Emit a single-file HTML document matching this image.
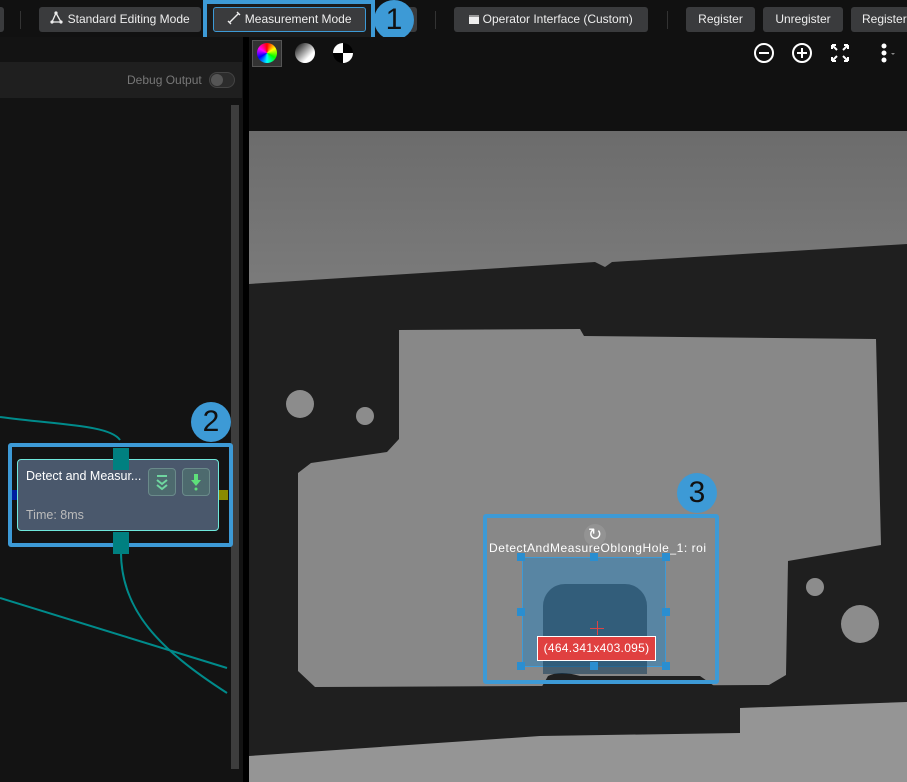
<!DOCTYPE html>
<html><head><style>
*{margin:0;padding:0;box-sizing:border-box}
body{width:907px;height:782px;background:#111;position:relative;overflow:hidden;font-family:"Liberation Sans",Arial,sans-serif;color:#ddd}
.btn{position:absolute;top:7px;height:25px;background:#3a3b3d;border-radius:3px;font-size:12px;color:#eee;line-height:25px;text-align:center}
.abs{position:absolute}
.badge{position:absolute;width:40px;height:40px;border-radius:50%;background:#3d9ad6;color:#111;font-size:30px;text-align:center;line-height:40px}
</style></head><body>
<div class="abs" style="left:0;top:0;width:907px;height:37px;background:#111"></div>
<div class="btn" style="left:-4px;width:8px"></div>
<div class="abs" style="left:20px;top:11px;width:1px;height:18px;background:#333"></div>
<div class="btn" style="left:39px;width:162px">
<svg width="14" height="14" viewBox="0 0 14 14" style="vertical-align:-2px"><circle cx="6" cy="2" r="1.6" fill="#eee"/><circle cx="2" cy="11" r="1.6" fill="#eee"/><circle cx="11" cy="11" r="1.6" fill="#eee"/><path d="M6 2L2 11M6 2L11 11M2 11H11" stroke="#eee" stroke-width="1.3"/></svg> Standard Editing Mode</div>
<div class="abs" style="left:203px;top:0;width:172px;height:41px;border:4px solid #3d9ad6;background:#1b1b1b"></div>
<div class="btn" style="left:213px;width:153px;top:7px;border:1px solid #3d9ad6;line-height:23px;background:#3a3b3d">
<svg width="14" height="14" viewBox="0 0 14 14" style="vertical-align:-2px"><path d="M2 12L12 2M1 10l3 3M10 1l3 3" stroke="#eee" stroke-width="1.4"/></svg> Measurement Mode</div>
<div class="btn" style="left:395px;width:22px"></div>
<div class="badge" style="left:374px;top:0">1</div>
<div class="abs" style="left:435px;top:11px;width:1px;height:18px;background:#333"></div>
<div class="btn" style="left:454px;width:194px"><span style="display:inline-block;width:10px;height:9px;background:#eee;border-top:2px solid #999;vertical-align:-1px"></span> Operator Interface (Custom)</div>
<div class="abs" style="left:667px;top:11px;width:1px;height:18px;background:#333"></div>
<div class="btn" style="left:686px;width:69px">Register</div>
<div class="btn" style="left:763px;width:80px">Unregister</div>
<div class="btn" style="left:851px;width:70px;text-align:left;padding-left:11px">Register</div>

<div class="abs" style="left:0;top:37px;width:243px;height:745px;background:#131313"></div>
<div class="abs" style="left:0;top:62px;width:242px;height:36px;background:#1f1f1f"></div>
<div class="abs" style="left:127px;top:73px;font-size:12px;color:#777">Debug Output</div>
<div class="abs" style="left:209px;top:72px;width:26px;height:16px;border-radius:8px;background:#2c2c2c;border:1px solid #444"></div>
<div class="abs" style="left:211px;top:74px;width:12px;height:12px;border-radius:50%;background:#555"></div>
<div class="abs" style="left:231px;top:105px;width:8px;height:664px;background:#3d3d3d"></div>
<div class="abs" style="left:243px;top:37px;width:6px;height:745px;background:#000"></div>
<svg class="abs" style="left:0;top:0" width="243" height="782">
<path d="M0 417 C60 425 110 425 120 440" stroke="#008b8b" stroke-width="2" fill="none"/>
<path d="M0 598 L227 668" stroke="#008b8b" stroke-width="2" fill="none"/>
<path d="M121 550 C120 610 160 650 227 693" stroke="#008b8b" stroke-width="2" fill="none"/>
</svg>
<div class="abs" style="left:8px;top:443px;width:225px;height:104px;border:4px solid #3d9ad6;border-radius:3px"></div>
<div class="abs" style="left:17px;top:459px;width:202px;height:72px;background:#4a586c;border:1px solid #6fe8dc;border-radius:4px"></div>
<div class="abs" style="left:26px;top:469px;font-size:12.5px;color:#fff">Detect and Measur...</div>
<div class="abs" style="left:26px;top:508px;font-size:12.5px;color:#bbb">Time: 8ms</div>
<div class="abs" style="left:148px;top:468px;width:28px;height:28px;border:1px solid #6a8a8a;border-radius:4px;background:#4d6a6e"><svg width="26" height="26" viewBox="0 0 26 26"><path d="M8 7h10" stroke="#6fd6a0" stroke-width="2"/><path d="M8 11l5 4 5-4M8 16l5 4 5-4" stroke="#6fd6a0" stroke-width="2" fill="none"/></svg></div>
<div class="abs" style="left:182px;top:468px;width:28px;height:28px;border:1px solid #6a8a8a;border-radius:4px;background:#4d6a6e"><svg width="26" height="26" viewBox="0 0 26 26"><path d="M11 5h4v6h3l-5 6-5-6h3z" fill="#5ee07a"/><circle cx="13" cy="20" r="1.5" fill="#5ee07a"/></svg></div>
<div class="abs" style="left:113px;top:448px;width:16px;height:22px;background:#008080"></div>
<div class="abs" style="left:113px;top:532px;width:16px;height:22px;background:#008080"></div>
<div class="abs" style="left:12px;top:490px;width:5px;height:10px;background:#0020a0"></div>
<div class="abs" style="left:219px;top:490px;width:9px;height:10px;background:#8a8a00"></div>
<div class="badge" style="left:191px;top:402px">2</div>

<div class="abs" style="left:249px;top:37px;width:658px;height:94px;background:#111"></div>
<div class="abs" style="left:252px;top:40px;width:30px;height:27px;background:#333;border:1px solid #555"></div>
<div class="abs" style="left:257px;top:43px;width:20px;height:20px;border-radius:50%;background:conic-gradient(red,yellow,lime,cyan,blue,magenta,red)"></div>
<div class="abs" style="left:295px;top:43px;width:20px;height:20px;border-radius:50%;background:linear-gradient(135deg,#000,#fff 70%)"></div>
<div class="abs" style="left:333px;top:43px;width:20px;height:20px;border-radius:50%;background:conic-gradient(#000 0 25%,#fff 25% 50%,#000 50% 75%,#fff 75%)"></div>
<svg class="abs" style="left:750px;top:40px" width="157" height="26" viewBox="0 0 157 26">
<circle cx="14" cy="13" r="9" stroke="#fff" stroke-width="2" fill="none"/><path d="M9 13h10" stroke="#fff" stroke-width="2"/>
<circle cx="52" cy="13" r="9" stroke="#fff" stroke-width="2" fill="none"/><path d="M47 13h10M52 8v10" stroke="#fff" stroke-width="2"/>
<path d="M82 5l5 5M82 5h4M82 5v4M98 5l-5 5M98 5h-4M98 5v4M82 21l5-5M82 21h4M82 21v-4M98 21l-5-5M98 21h-4M98 21v-4" stroke="#fff" stroke-width="2"/>
<circle cx="134" cy="6" r="2.5" fill="#fff"/><circle cx="134" cy="13" r="2.5" fill="#fff"/><circle cx="134" cy="20" r="2.5" fill="#fff"/><path d="M141 13h4l-2 2z" fill="#888"/>
</svg>
<svg class="abs" style="left:249px;top:131px" width="658" height="651" viewBox="249 131 658 651">
<defs><linearGradient id="g" x1="0" y1="0" x2="0" y2="1"><stop offset="0" stop-color="#6c6c6c"/><stop offset="1" stop-color="#7c7c7c"/></linearGradient></defs>
<rect x="249" y="131" width="658" height="170" fill="url(#g)"/>
<polygon points="249,284 595,262 605,267 612,262 907,244 907,782 249,782" fill="#1f1f1f"/>
<polygon points="399,330 580,329 584,336 876,339 881,545 788,561 786,675 769,685 315,687 298,671 298,473 311,463 387,452 399,439" fill="#888"/>
<polygon points="249,756 540,736 740,733 740,708 907,702 907,782 249,782" fill="#959595"/>
<circle cx="300" cy="404" r="14" fill="#8c8c8c"/>
<circle cx="365" cy="416" r="9" fill="#8c8c8c"/>
<circle cx="815" cy="587" r="9" fill="#8c8c8c"/>
<circle cx="860" cy="624" r="19" fill="#8c8c8c"/>
<path d="M548 676 Q560 670 580 676 L700 676 L720 690 L540 690Z" fill="#1f1f1f"/>
</svg>
<div class="abs" style="left:522px;top:557px;width:144px;height:110px;background:rgba(40,130,190,0.5);border:1px solid #3d9ad6"></div>
<div class="abs" style="left:543px;top:584px;width:104px;height:90px;border-radius:22px 22px 0 0;background:rgba(20,60,90,0.55)"></div>
<div class="abs" style="left:590px;top:628px;width:14px;height:1px;background:#d44"></div>
<div class="abs" style="left:597px;top:621px;width:1px;height:14px;background:#d44"></div>
<div class="abs" style="left:537px;top:636px;width:119px;height:25px;background:#e04040;border:1px solid #fff;color:#fff;font-size:12px;text-align:center;line-height:23px;letter-spacing:0.3px">(464.341x403.095)</div>
<div class="abs" style="left:489px;top:541px;font-size:12px;color:#fff;letter-spacing:0.55px">DetectAndMeasureOblongHole_1: roi</div>
<div class="abs" style="left:584px;top:524px;width:22px;height:22px;border-radius:50%;background:rgba(150,150,150,0.8);color:#fff;font-size:17px;text-align:center;line-height:22px">↻</div>
<div class="abs" style="left:517px;top:553px;width:8px;height:8px;background:#2a8ed0"></div>
<div class="abs" style="left:590px;top:553px;width:8px;height:8px;background:#2a8ed0"></div>
<div class="abs" style="left:662px;top:553px;width:8px;height:8px;background:#2a8ed0"></div>
<div class="abs" style="left:517px;top:608px;width:8px;height:8px;background:#2a8ed0"></div>
<div class="abs" style="left:662px;top:608px;width:8px;height:8px;background:#2a8ed0"></div>
<div class="abs" style="left:517px;top:662px;width:8px;height:8px;background:#2a8ed0"></div>
<div class="abs" style="left:590px;top:662px;width:8px;height:8px;background:#2a8ed0"></div>
<div class="abs" style="left:662px;top:662px;width:8px;height:8px;background:#2a8ed0"></div>
<div class="abs" style="left:483px;top:514px;width:236px;height:170px;border:4px solid #3d9ad6;border-radius:3px"></div>
<div class="badge" style="left:677px;top:473px">3</div>
</body></html>
